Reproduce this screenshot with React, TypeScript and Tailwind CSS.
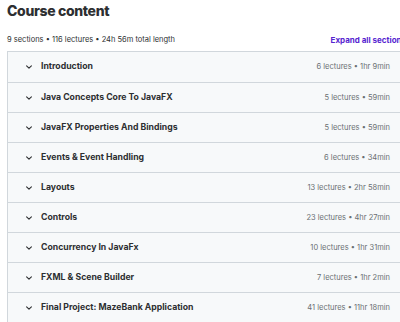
import React from "react";

const SECTIONS = [
  { title: "Introduction", meta: "6 lectures • 1hr 9min" },
  { title: "Java Concepts Core To JavaFX", meta: "5 lectures • 59min" },
  { title: "JavaFX Properties And Bindings", meta: "5 lectures • 59min" },
  { title: "Events & Event Handling", meta: "6 lectures • 34min" },
  { title: "Layouts", meta: "13 lectures • 2hr 58min" },
  { title: "Controls", meta: "23 lectures • 4hr 27min" },
  { title: "Concurrency In JavaFx", meta: "10 lectures • 1hr 31min" },
  { title: "FXML & Scene Builder", meta: "7 lectures • 1hr 2min" },
  { title: "Final Project: MazeBank Application", meta: "41 lectures • 11hr 18min" },
];

function Chevron() {
  return (
    <svg width="8" height="8" viewBox="0 0 10 10" className="text-[#2d2f31] shrink-0">
      <path d="M2 3.5 L5 6.5 L8 3.5" fill="none" stroke="currentColor" strokeWidth="1.4" strokeLinecap="round" strokeLinejoin="round" />
    </svg>
  );
}

export default function App() {
  return (
    <div className="w-[400px] h-[322px] overflow-hidden bg-white font-['Inter',sans-serif] text-[#2d2f31]">
      <div className="w-[400px] pl-[7px]">
        <h2 className="text-[14px] font-extrabold leading-none pt-[4px] tracking-tight">Course content</h2>

        <div className="w-[399px] flex items-center justify-between mt-[17px] h-[10px]">
          <span className="text-[7.5px] text-[#2d2f31] whitespace-nowrap">
            9 sections • 116 lectures • 24h 56m total length
          </span>
          <span className="text-[8px] font-bold text-[#5624d0] whitespace-nowrap">Expand all sections</span>
        </div>

        {/* Sections */}
        <div className="w-[410px] mt-[6px] border border-[#d1d7dc] border-r-0">
          {SECTIONS.map((s, i) => (
            <div
              key={s.title}
              className={`h-[30px] bg-[#f7f9fa] flex items-center pl-[17px] pr-[27px] ${i > 0 ? "border-t border-[#d1d7dc]" : ""}`}
            >
              <Chevron />
              <span className="ml-[8px] text-[8.7px] font-bold whitespace-nowrap">{s.title}</span>
              <span className="ml-auto text-[7.5px] text-[#6a6f73] whitespace-nowrap">{s.meta}</span>
            </div>
          ))}
        </div>
      </div>
    </div>
  );
}
